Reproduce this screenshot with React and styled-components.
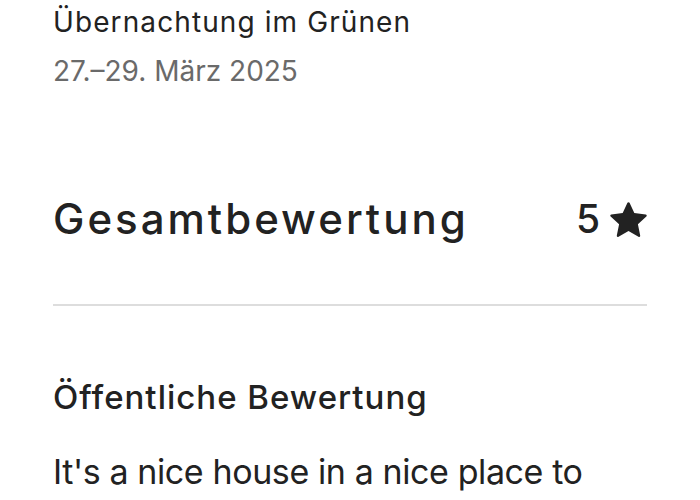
import styled, { createGlobalStyle } from "styled-components";

const GlobalStyle = createGlobalStyle`
  body {
    margin: 0;
    background: #fff;
    font-family: Inter, "Open Sans", sans-serif;
    color: #222222;
  }
`;

const Container = styled.div`
  padding: 4px 53px 0;
  height: 500px;
  overflow: hidden;
  box-sizing: border-box;
`;

const StayTitle = styled.div`
  font-size: 28px;
  line-height: 36px;
  font-weight: 400;
  letter-spacing: 1.1px;
`;

const StayDate = styled.div`
  margin-top: 13px;
  font-size: 28px;
  line-height: 36px;
  color: #6a6a6a;
`;

const RatingRow = styled.div`
  display: flex;
  justify-content: space-between;
  align-items: center;
  margin-top: 106px;
  height: 48px;
`;

const RatingLabel = styled.h1`
  margin: 0;
  font-size: 42px;
  line-height: 48px;
  font-weight: 500;
  letter-spacing: 3px;
`;

const RatingValue = styled.div`
  display: flex;
  align-items: center;
  gap: 10px;
  font-size: 39px;
  line-height: 48px;
  font-weight: 500;
`;

const Divider = styled.hr`
  margin: 61px 0 0;
  border: none;
  height: 2px;
  background: #dddddd;
`;

const SectionTitle = styled.h2`
  margin: 71px 0 0;
  font-size: 33px;
  line-height: 40px;
  font-weight: 500;
  letter-spacing: 1px;
`;

const ReviewText = styled.p`
  margin: 31px 0 0;
  font-size: 34px;
  line-height: 48px;
  font-weight: 400;
  letter-spacing: -0.4px;
`;

const Star = () => (
  <svg width="37" height="37" viewBox="0 0 32 32" fill="#222222" aria-hidden="true">
    <path d="M15.094 1.579l-4.124 8.885-9.86 1.27a1 1 0 0 0-.542 1.736l7.293 6.565-1.965 9.852a1 1 0 0 0 1.483 1.061L16 25.951l8.625 4.997a1 1 0 0 0 1.482-1.06l-1.965-9.853 7.293-6.565a1 1 0 0 0-.541-1.735l-9.86-1.271-4.127-8.885a1 1 0 0 0-1.814 0z" />
  </svg>
);

const App = () => {
  return (
    <Container>
      <GlobalStyle />
      <StayTitle>Übernachtung im Grünen</StayTitle>
      <StayDate>27.–29. März 2025</StayDate>
      <RatingRow>
        <RatingLabel>Gesamtbewertung</RatingLabel>
        <RatingValue>
          5
          <Star />
        </RatingValue>
      </RatingRow>
      <Divider />
      <SectionTitle>Öffentliche Bewertung</SectionTitle>
      <ReviewText>
        It's a nice house in a nice place to relax and enjoy the nature around it.
      </ReviewText>
    </Container>
  );
};

export default App;
